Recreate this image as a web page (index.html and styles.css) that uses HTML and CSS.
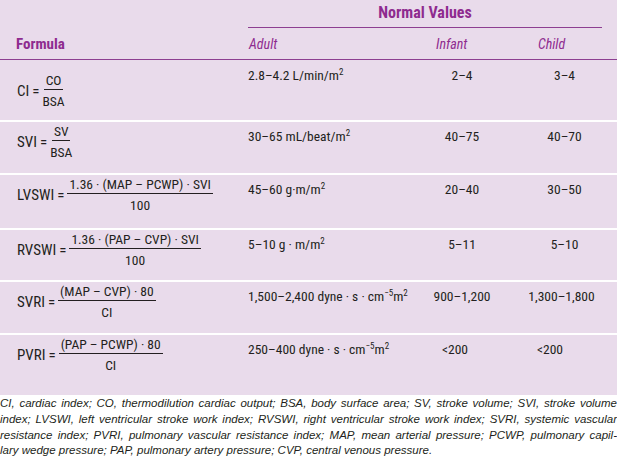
FILE: index.html
```html
<!DOCTYPE html>
<html>
<head>
<meta charset="utf-8">
<link rel="stylesheet" href="styles.css">
</head>
<body>
<div class="tbl">
  <div class="head">
    <div class="h-formula">Formula</div>
    <div class="h-right">
      <div class="h-group">Normal Values</div>
      <div class="h-cols">
        <span class="h-adult">Adult</span>
        <span class="h-infant">Infant</span>
        <span class="h-child">Child</span>
      </div>
    </div>
  </div>

  <div class="row r1">
    <div class="formula">CI<span class="eq">=</span><span class="frac"><span class="num">CO</span><span class="den">BSA</span></span></div>
    <div class="adult">2.8–4.2 L/min/m<sup>2</sup></div>
    <div class="infant">2–4</div>
    <div class="child">3–4</div>
  </div>

  <div class="row r2">
    <div class="formula">SVI<span class="eq">=</span><span class="frac"><span class="num">SV</span><span class="den">BSA</span></span></div>
    <div class="adult">30–65 mL/beat/m<sup>2</sup></div>
    <div class="infant">40–75</div>
    <div class="child">40–70</div>
  </div>

  <div class="row r3">
    <div class="formula">LVSWI<span class="eq">=</span><span class="frac"><span class="num">1.36 · (MAP – PCWP) · SVI</span><span class="den">100</span></span></div>
    <div class="adult">45–60 g·m/m<sup>2</sup></div>
    <div class="infant">20–40</div>
    <div class="child">30–50</div>
  </div>

  <div class="row r4">
    <div class="formula">RVSWI<span class="eq">=</span><span class="frac"><span class="num">1.36 · (PAP – CVP) · SVI</span><span class="den">100</span></span></div>
    <div class="adult">5–10 g · m/m<sup>2</sup></div>
    <div class="infant">5–11</div>
    <div class="child">5–10</div>
  </div>

  <div class="row r5">
    <div class="formula">SVRI<span class="eq">=</span><span class="frac"><span class="num">(MAP – CVP) · 80</span><span class="den">CI</span></span></div>
    <div class="adult">1,500–2,400 dyne · s · cm<sup>−5</sup>m<sup>2</sup></div>
    <div class="infant">900–1,200</div>
    <div class="child wide">1,300–1,800</div>
  </div>

  <div class="row r6">
    <div class="formula">PVRI<span class="eq">=</span><span class="frac"><span class="num">(PAP – PCWP) · 80</span><span class="den">CI</span></span></div>
    <div class="adult">250–400 dyne · s · cm<sup>−5</sup>m<sup>2</sup></div>
    <div class="infant lt">&lt;200</div>
    <div class="child lt">&lt;200</div>
  </div>
</div>

<div class="notes">
  <div class="ln">CI, cardiac index; CO, thermodilution cardiac output; BSA, body surface area; SV, stroke volume; SVI, stroke volume</div>
  <div class="ln">index; LVSWI, left ventricular stroke work index; RVSWI, right ventricular stroke work index; SVRI, systemic vascular</div>
  <div class="ln">resistance index; PVRI, pulmonary vascular resistance index; MAP, mean arterial pressure; PCWP, pulmonary capil-</div>
  <div class="ln last">lary wedge pressure; PAP, pulmonary artery pressure; CVP, central venous pressure.</div>
</div>
</body>
</html>
```

FILE: styles.css
```css
html, body {
  margin: 0;
  padding: 0;
  background: #ffffff;
}

body {
  width: 617px;
  font-family: "Liberation Sans Narrow", "Roboto Condensed", "DejaVu Sans", sans-serif;
  font-stretch: condensed;
  color: #231f20;
}

.tbl {
  background: #e9dbeb;
  height: 395px;
}

.head {
  height: 59px;
  border-bottom: 1.5px solid #8d3f91;
  display: flex;
  align-items: flex-end;
  color: #8e2b8f;
}

.h-formula {
  width: 232px;
  padding-left: 16px;
  font-weight: bold;
  font-size: 15px;
  padding-bottom: 6px;
}

.h-right {
  flex: 1;
  display: flex;
  flex-direction: column;
}

.h-group {
  width: 354px;
  height: 28px;
  box-sizing: border-box;
  border-bottom: 1.5px solid #8d3f91;
  text-align: center;
  font-weight: bold;
  font-size: 16px;
  line-height: 26px;
}

.h-cols {
  display: flex;
  font-style: italic;
  font-size: 14px;
  height: 31px;
  align-items: center;
}

.h-adult { width: 187px; padding-left: 1px; }
.h-infant { width: 102px; }

.row {
  display: grid;
  grid-template-columns: 248px 164px 100px 1fr;
  box-sizing: border-box;
  border-top: 2px solid #ffffff;
  font-size: 13.5px;
}

.r1 { border-top: none; height: 60px; padding-top: 1px; }
.r2 { height: 53px; }
.r3 { height: 55px; }
.r4 { height: 52px; }
.r5 { height: 53px; }
.r6 { height: 62px; }

.formula {
  padding-left: 17px;
  display: flex;
  align-items: center;
  align-self: start;
  padding-top: 1px;
  font-size: 15px;
}

.r1 .formula { padding-top: 11px; }

.eq {
  margin: 0 3px 0 3px;
}

.frac {
  display: inline-flex;
  flex-direction: column;
  align-items: center;
  font-size: 13.5px;
}

.num {
  padding: 0 2px 1px;
  border-bottom: 1px solid #231f20;
  line-height: 16px;
}

.den {
  line-height: 18px;
  padding-top: 2px;
}

.adult, .infant, .child {
  padding-top: 6px;
  line-height: 16px;
}

.infant, .child {
  text-align: center;
}

.child.wide { padding-right: 6px; }
.infant.lt { text-align: left; padding-left: 30px; }
.child.lt { text-align: left; padding-left: 25px; }

sup {
  font-size: 9px;
  line-height: 0;
  vertical-align: 5px;
}

.notes {
  padding-top: 1px;
  font-family: "Liberation Sans", "DejaVu Sans", sans-serif;
  font-style: italic;
  font-size: 11.5px;
  line-height: 15.8px;
  color: #231f20;
}

.ln {
  text-align: justify;
  text-align-last: justify;
  white-space: nowrap;
}

.ln.last {
  text-align-last: left;
}
```
